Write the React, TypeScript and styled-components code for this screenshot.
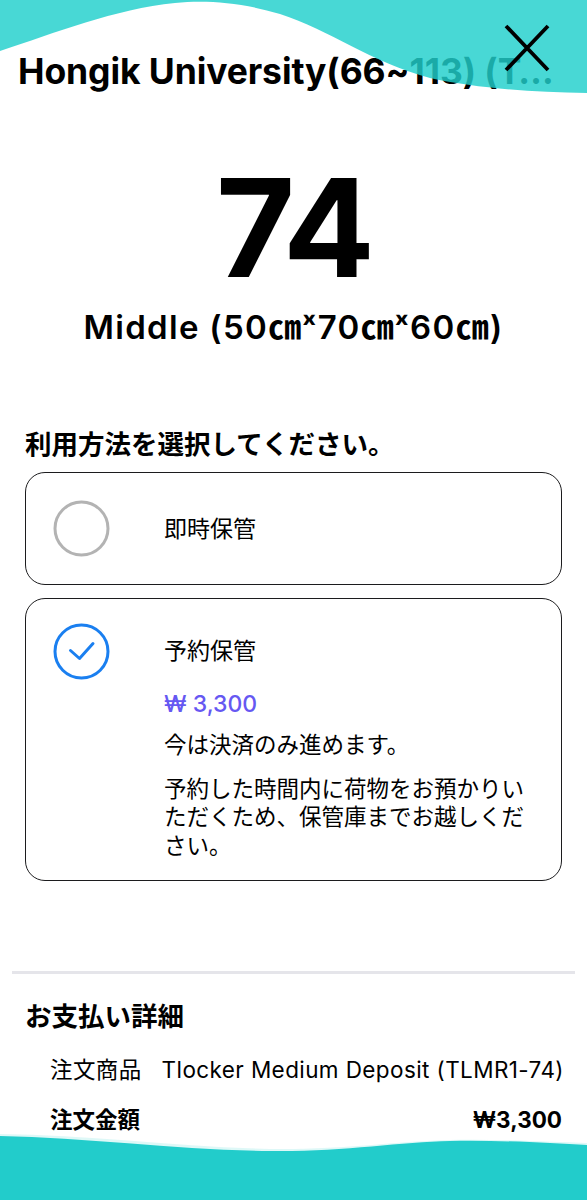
import * as React from 'react'
import styled, { createGlobalStyle } from 'styled-components'

const GlobalStyle = createGlobalStyle`
	html, body {
		margin: 0;
		padding: 0;
		background: #ffffff;
	}
	body {
		font-family: Inter, "Noto Sans CJK JP", sans-serif;
		color: #000000;
	}
`

const Screen = styled.div`
	position: relative;
	width: 100%;
	height: 1200px;
	overflow: hidden;
	background: #ffffff;
`

const TopWave = styled.svg`
	position: absolute;
	top: 0;
	left: 0;
	width: 100%;
	height: 100px;
	z-index: 2;
	pointer-events: none;
`

const BottomWave = styled.svg`
	position: absolute;
	bottom: 0;
	left: 0;
	width: 100%;
	height: 66px;
	z-index: 2;
`

const CloseButton = styled.button`
	position: absolute;
	top: 24px;
	left: 503px;
	width: 48px;
	height: 48px;
	padding: 0;
	border: none;
	background: none;
	z-index: 3;
	svg {
		display: block;
	}
`

const Header = styled.header`
	padding: 50px 20px 0 18px;
`

const Title = styled.h1`
	margin: 0;
	font-size: 35.5px;
	line-height: 44px;
	font-weight: 700;
	letter-spacing: -0.1px;
	white-space: nowrap;
`

const LockerNumber = styled.div`
	margin-top: 66px;
	text-align: center;
	font-size: 136px;
	line-height: 136px;
	font-weight: 700;
	letter-spacing: -4px;
`

const SizeLabel = styled.div`
	margin-top: 12px;
	text-align: center;
	font-size: 33px;
	line-height: 38px;
	font-weight: 600;
	letter-spacing: 1.3px;
`

const Section = styled.section`
	padding: 0 25px;
`

const SectionTitle = styled.h2<{ $top: number }>`
	margin: ${p => p.$top}px 0 0;
	font-size: 26.5px;
	line-height: 36px;
	font-weight: 700;
`

const OptionCard = styled.div<{ $selected?: boolean }>`
	display: flex;
	align-items: ${p => (p.$selected ? 'flex-start' : 'center')};
	gap: 54px;
	margin-top: ${p => (p.$selected ? 13 : 10)}px;
	padding: ${p => (p.$selected ? '24px 24px 20px 27px' : '27px 24px 27px 27px')};
	border: 1.5px solid #1c1c1e;
	border-radius: 20px;
`

const Radio = styled.svg`
	flex: none;
	width: 57px;
	height: 57px;
`

const OptionBody = styled.div<{ $selected?: boolean }>`
	flex: 1;
	padding-top: ${p => (p.$selected ? 13 : 0)}px;
	padding-right: 6px;
`

const OptionName = styled.div`
	font-size: 23px;
	line-height: 30px;
`

const Price = styled.div`
	margin-top: 23px;
	font-size: 23px;
	line-height: 30px;
	font-weight: 500;
	color: #6658f2;
`

const Note = styled.p<{ $gap: number }>`
	margin: ${p => p.$gap}px 0 0;
	font-size: 22.5px;
	line-height: 28.5px;
`

const Divider = styled.hr`
	margin: 90px 12px 0;
	border: none;
	height: 3px;
	background: #e5e5ea;
`

const DetailRow = styled.div<{ $strong?: boolean; $top: number }>`
	display: flex;
	justify-content: space-between;
	gap: 20px;
	margin-top: ${p => p.$top}px;
	padding-left: 25px;
	font-size: 22.5px;
	line-height: 30px;
	letter-spacing: ${p => (p.$strong ? 0 : 0.4)}px;
	font-weight: ${p => (p.$strong ? 700 : 400)};
	white-space: nowrap;
`

const RadioIcon: React.FC<{ checked?: boolean }> = ({ checked }) => (
	<Radio viewBox="0 0 57 57">
		<circle cx="28.5" cy="28.5" r="26.5" fill="none" stroke={checked ? '#1a7ff0' : '#b3b3b3'} strokeWidth="3" />
		{checked && (
			<path
				d="M17.5 27.5 L26.5 35.5 L40 20.5"
				fill="none"
				stroke="#1a7ff0"
				strokeWidth="3"
				strokeLinecap="round"
				strokeLinejoin="round"
			/>
		)}
	</Radio>
)

const App: React.FC = () => (
	<Screen>
		<GlobalStyle />

		<Header>
			<Title>Hongik University(66~113) (T…</Title>
		</Header>

		<TopWave viewBox="0 0 587 100" preserveAspectRatio="none">
			<path
				d="M0 0 H587 V93 C 530 92, 475 88, 430 78 C 370 62, 330 30, 280 14 C 240 2, 205 0, 175 3 C 115 9, 55 33, 0 51 Z"
				fill="rgb(32,208,204)"
				fillOpacity="0.82"
			/>
		</TopWave>

		<CloseButton aria-label="close">
			<svg width="48" height="48" viewBox="0 0 48 48">
				<path d="M3 2 L45 46 M45 2 L3 46" stroke="#000" strokeWidth="3.8" />
			</svg>
		</CloseButton>

		<LockerNumber>74</LockerNumber>
		<SizeLabel>Middle (50㎝ˣ70㎝ˣ60㎝)</SizeLabel>

		<Section>
			<SectionTitle $top={80}>利用方法を選択してください。</SectionTitle>

			<OptionCard>
				<RadioIcon />
				<OptionBody>
					<OptionName>即時保管</OptionName>
				</OptionBody>
			</OptionCard>

			<OptionCard $selected>
				<RadioIcon checked />
				<OptionBody $selected>
					<OptionName>予約保管</OptionName>
					<Price>₩ 3,300</Price>
					<Note $gap={12}>今は決済のみ進めます。</Note>
					<Note $gap={15}>予約した時間内に荷物をお預かりいただくため、保管庫までお越しください。</Note>
				</OptionBody>
			</OptionCard>
		</Section>

		<Divider />

		<Section>
			<SectionTitle $top={24}>お支払い詳細</SectionTitle>
			<DetailRow $top={21}>
				<span>注文商品</span>
				<span>Tlocker Medium Deposit (TLMR1-74)</span>
			</DetailRow>
			<DetailRow $top={20} $strong>
				<span>注文金額</span>
				<span>₩3,300</span>
			</DetailRow>
		</Section>

		<BottomWave viewBox="0 0 587 66" preserveAspectRatio="none">
			<path d="M0 0 C 90 1, 180 13, 270 15 C 340 16, 400 7, 450 6 C 500 5, 550 8, 587 9 V66 H0 Z" fill="#c8f3f2" fillOpacity="0.6" />
			<path d="M0 2 C 90 4, 180 16, 270 17 C 340 18, 400 8, 450 7 C 500 6, 550 9, 587 11 V66 H0 Z" fill="#22cccb" />
		</BottomWave>
	</Screen>
)

export default App
